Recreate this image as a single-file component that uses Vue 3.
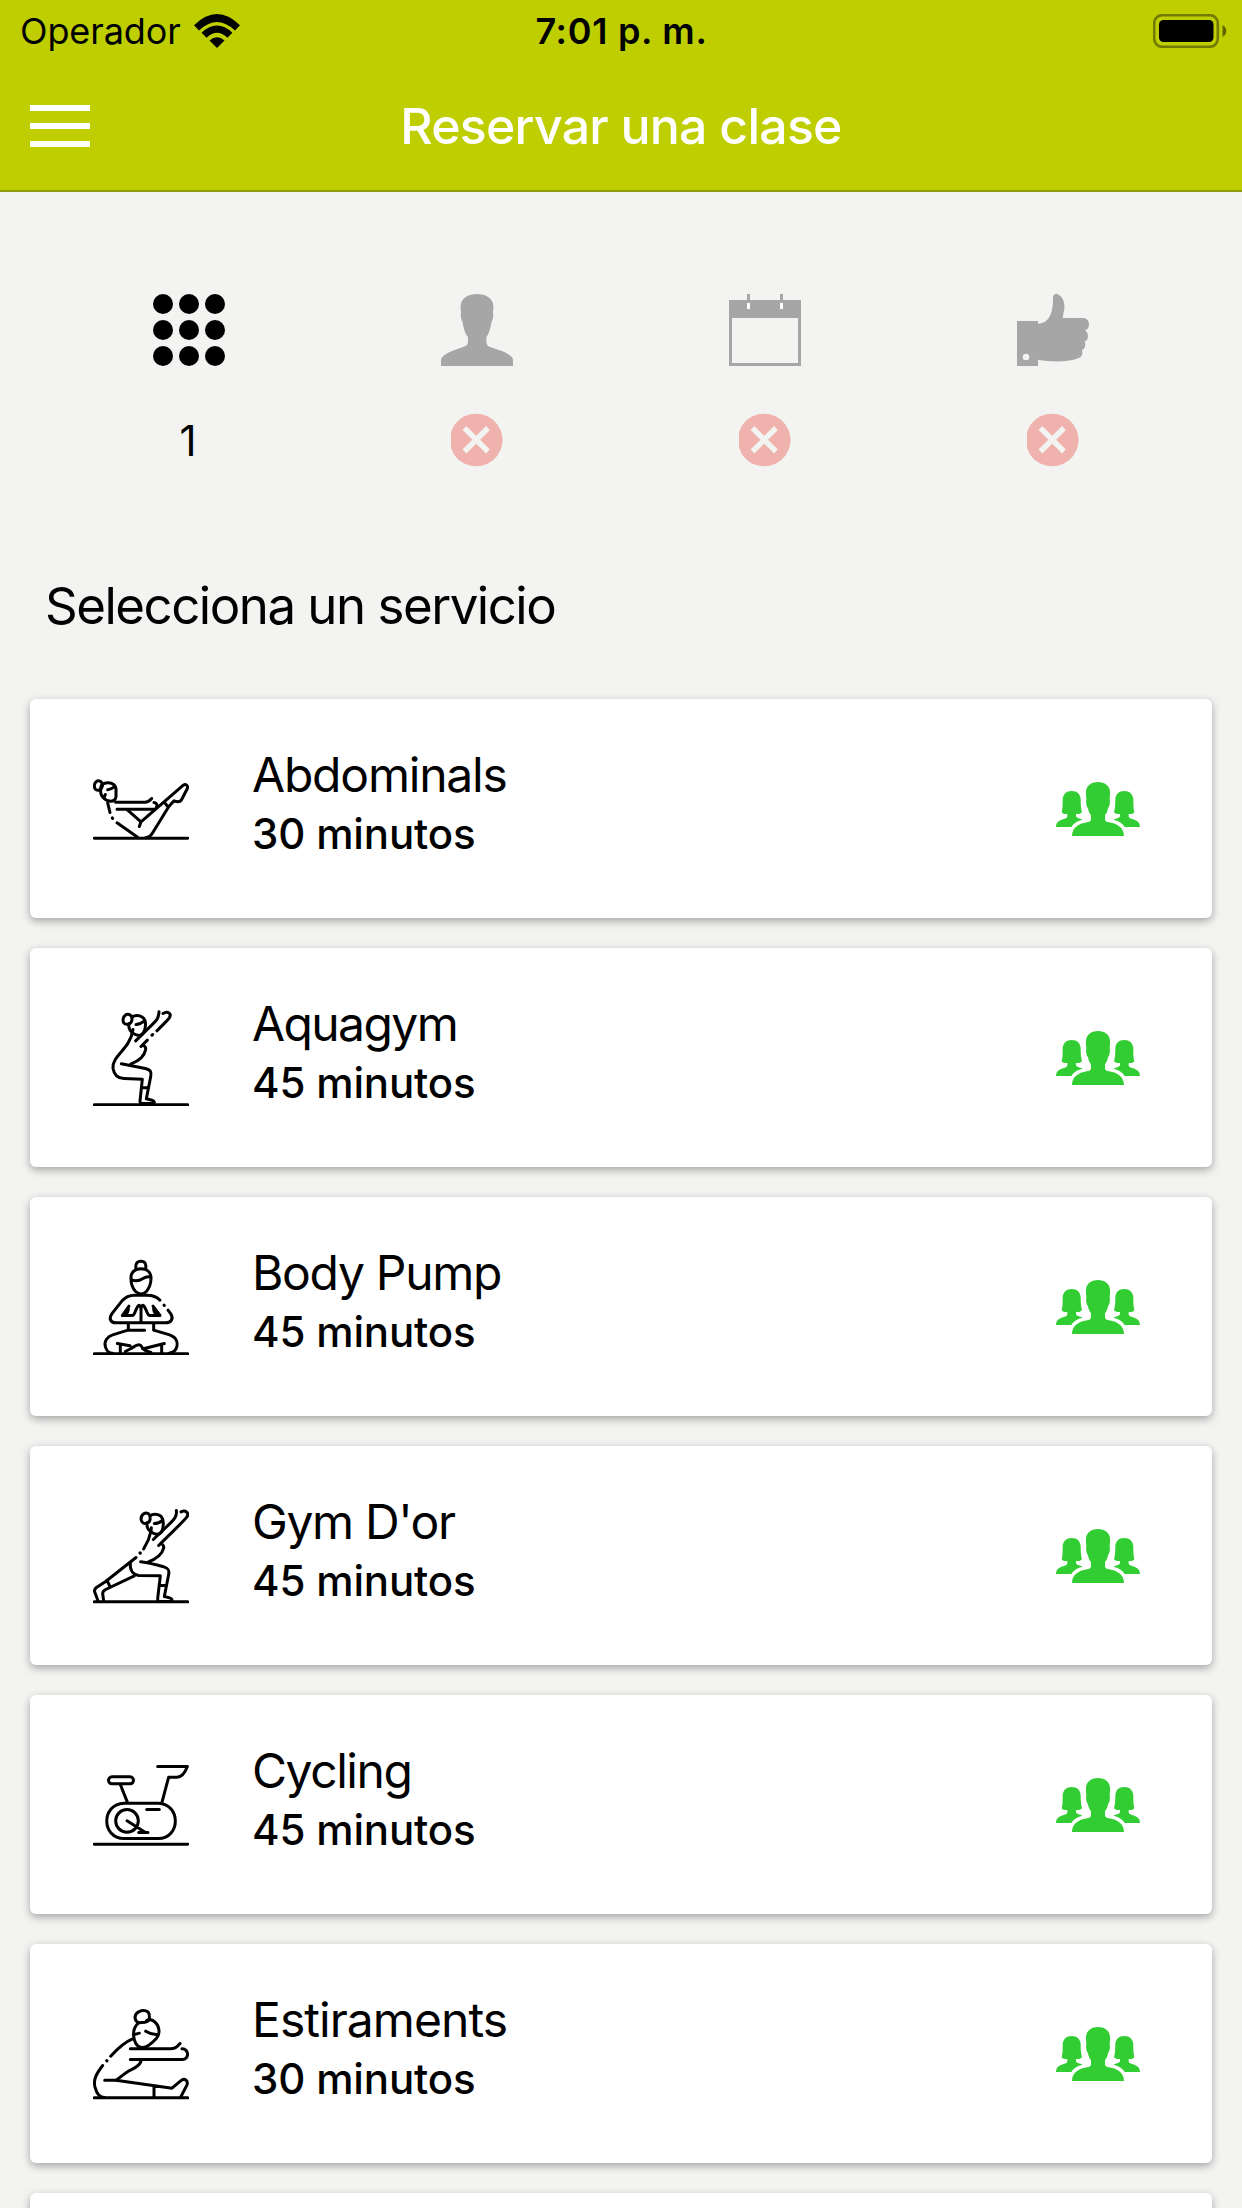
<script setup>
const steps = [
  { id: 'service', label: '1' },
  { id: 'person' },
  { id: 'date' },
  { id: 'confirm' },
]

const services = [
  {
    name: 'Abdominals',
    duration: '30 minutos',
    tracking: -1.2,
    viewBox: '39 1.5 288 288',
    paths: [
      'M43 233H323',
      'M62 63C52 57 43 65 43 77C43 88 52 91 59 88C68 84 71 70 62 63',
      'M66 72C80 62 104 66 108 84V108C107 118 101 122 93 122C76 122 60 108 62 88C62 80 63 75 66 72M104 79C96 84 90 87 83 88M76 102L73 110',
      'M107 125H195C206 125 209 121 215 114',
      'M111 146H221M222 126C231 128 234 134 228 143',
      'M83 127L90 156M97 172L98 174M111 187L173 230',
      'M143 149L183 184L310 74C317 69 325 75 322 84L305 117C301 125 293 125 282 121L266 139L218 217C213 226 207 231 197 232M183 184L178 198M254 127L265 140',
    ],
  },
  {
    name: 'Aquagym',
    duration: '45 minutos',
    tracking: -1.6,
    viewBox: '39 28.5 288 288',
    paths: [
      'M43 313H323',
      'M151 44C140 37 129 46 129 59C129 70 137 73 146 71M151 44C160 52 156 68 146 71',
      'M156 49C172 40 190 47 195 60C198 72 195 88 190 97C184 107 173 107 160 99C148 90 145 80 147 70M192 62C184 69 178 72 168 72',
      'M159 87C157 101 154 112 144 128C128 154 96 176 99 203C102 223 113 233 132 234L187 236L180 302C180 307 183 309 189 309H218C226 309 224 302 216 299L199 295L212 229C215 214 213 209 196 204L124 190',
      'M152 191C180 180 194 164 197 147C198 140 195 137 190 134M189 262H205',
      'M167 121L218 71C231 59 236 52 237 34M249 39C263 30 276 39 268 52C261 62 247 73 231 91M183 138L202 119M216 104L218 102',
    ],
  },
  {
    name: 'Body Pump',
    duration: '45 minutos',
    tracking: -1.3,
    viewBox: '39 25.5 288 288',
    paths: [
      'M43 310H323',
      'M168 56C166 40 170 32 183 32C196 32 199 42 197 56M183 55C164 55 152 66 153 83C153 99 159 115 167 123C177 132 190 132 199 123C209 111 213 99 213 83C213 65 201 55 183 55',
      'M154 88C169 94 180 90 189 84C197 79 204 77 212 80',
      'M240 149C230 138 218 134 200 134H163C144 134 135 141 126 151L97 188C85 203 91 217 108 217H257C274 217 281 204 273 191L264 179M252 164L253 165',
      'M183 214V180C183 160 176 161 170 174C163 187 164 195 156 195H127L147 167M183 180C183 160 190 161 196 174C203 187 202 195 210 195H240L219 167M133 193C142 189 146 183 145 171M233 193C224 189 220 183 221 171',
      'M145 220V239M221 220V239M194 239H144L98 253C82 258 72 272 76 288C79 300 86 308 98 308M221 239L269 253C286 259 294 272 291 287C288 300 280 307 267 308',
      'M112 279L150 286M253 279L193 294C184 296 187 283 177 283C169 283 163 288 153 294L136 303M121 284V307M245 285V307M187 294C194 301 204 303 213 306',
    ],
  },
  {
    name: "Gym D'or",
    duration: '45 minutos',
    tracking: -1.35,
    viewBox: '39 22.5 288 288',
    paths: [
      'M43 304H323',
      'M207 41C197 32 183 42 183 56C184 67 193 71 201 68M207 41C214 50 211 65 201 68',
      'M210 46C225 36 244 43 248 56C252 70 249 84 245 94C239 103 226 104 213 94C202 87 200 77 201 67M247 60C240 66 233 69 223 69',
      'M214 82L213 92L205 118L191 145M180 157L181 158M168 171L77 243L48 262C43 267 42 271 45 277L54 301M71 302L68 279C68 272 71 270 77 267L163 226M82 242L90 258',
      'M151 188C149 208 158 222 176 225L241 226L233 294C232 301 235 303 240 303H270C280 303 277 295 269 292L253 288L266 222C269 208 264 203 252 199C230 193 212 188 182 184M205 184C231 175 246 161 251 143C252 137 250 134 246 131M242 255H258',
      'M220 117L274 65C285 54 291 46 289 30M303 34C317 27 328 38 321 49C315 59 272 98 236 135',
    ],
  },
  {
    name: 'Cycling',
    duration: '45 minutos',
    tracking: -1.45,
    viewBox: '39 19.5 288 288',
    paths: [
      'M43 281H323',
      'M96 79H150C164 79 164 100 150 100H96C82 100 82 79 96 79',
      'M121 102L142 155M246 155L266 80H291C307 80 315 67 322 48H233',
      'M132 158H235C303 160 303 263 235 264H132C63 263 63 160 132 158',
      'M141 177A34 34 0 1 1 141 245A34 34 0 1 1 141 177M141 211L193 244M176 246H204M200 177H238',
    ],
  },
  {
    name: 'Estiraments',
    duration: '30 minutos',
    tracking: -0.95,
    viewBox: '39 16.5 288 288',
    paths: [
      'M43 292H323',
      'M176 67C162 61 161 42 176 34C192 26 207 31 208 44C210 56 206 63 195 65Z',
      'M176 67C160 80 158 101 164 121C168 133 177 141 186 141C200 142 216 128 229 114C242 99 238 76 225 65C217 57 207 56 200 60M160 103L178 98M197 92C207 98 219 104 236 101',
      'M158 115C133 125 111 146 92 167M80 180L81 181M68 195C49 220 39 237 45 260C49 276 57 291 74 291',
      'M151 145H270C284 145 290 141 300 129M306 145C327 144 329 177 307 177H151M184 179C181 193 172 200 153 208C138 214 126 228 108 239',
      'M74 239H108L276 263L302 241C314 231 325 241 321 253L303 288M222 257V290',
    ],
  },
  { name: '', duration: '', tracking: 0, viewBox: '0 0 288 288', paths: [] },
]
</script>

<template>
  <div class="screen">
    <header class="header">
      <div class="status">
        <div class="carrier">
          <span class="operator">Operador</span>
          <svg class="wifi" viewBox="0 0 46 34">
            <path d="M0 11.3Q23-11.3 46 11.3L41 16.4Q23-.6 5 16.4Z" />
            <path d="M7.6 18.8Q23 4.4 38.4 18.8L33.4 23.8Q23 13.8 12.6 23.8Z" />
            <path d="M15.5 26.6Q23 20 30.5 26.6L23 34Z" />
          </svg>
        </div>
        <span class="clock">7:01 p. m.</span>
        <div class="power">
          <svg class="battery" viewBox="0 0 74 34">
            <rect x="1.2" y="1.2" width="63.6" height="31.6" rx="8" fill="none" stroke="#000" stroke-opacity=".4" stroke-width="2.6" />
            <rect x="6" y="6" width="54.5" height="22" rx="4.5" />
            <path d="M69.5 11C74.5 13.5 74.5 20.5 69.5 23Z" fill-opacity=".5" />
          </svg>
        </div>
      </div>
      <div class="navbar">
        <button class="menu" aria-label="Menu"><i></i><i></i><i></i></button>
        <h1 class="title">Reservar una clase</h1>
      </div>
    </header>

    <main class="content">
      <div class="steps">
        <div v-for="step in steps" :key="step.id" class="step">
          <svg v-if="step.id === 'service'" class="step-icon active" viewBox="0 0 72 72">
            <template v-for="r in 3" :key="r">
              <circle v-for="c in 3" :key="c" :cx="c * 26 - 16" :cy="r * 26 - 16" r="10" />
            </template>
          </svg>
          <svg v-else-if="step.id === 'person'" class="step-icon" viewBox="933 72 216 216">
            <path d="M1041 72C1068 72 1089 86 1090 106C1091 115 1089 121 1089 130C1091 137 1089 148 1085 154C1082 173 1078 190 1069 202V215C1070 229 1078 230 1089 234C1112 241 1149 254 1149 270V288H933V270C933 254 970 240 994 233C1005 229 1014 228 1014 214V202C1004 190 1000 172 997 154C993 148 991 137 993 130C993 121 991 115 992 106C993 86 1014 72 1041 72Z" />
          </svg>
          <svg v-else-if="step.id === 'date'" class="step-icon" viewBox="87 72 216 216">
            <path fill-rule="evenodd" d="M87 90H141V72H150V90H240V72H249V90H303V288H87ZM96 144V279H294V144Z" />
            <path fill="#fff" d="M141 99H150V117H141ZM240 99H249V117H240Z" />
          </svg>
          <svg v-else class="step-icon" viewBox="951 72 216 216">
            <path fill-rule="evenodd" d="M951 153H1014V161C1048 161 1060 127 1059 84C1058 74 1067 68 1076 74C1091 83 1097 104 1091 126L1088 144H1149C1162 145 1167 153 1167 163C1167 173 1163 179 1155 181C1168 190 1166 211 1154 214C1158 224 1155 237 1146 240C1149 254 1146 260 1134 265C1106 277 1052 276 1014 269V288H951ZM978 251A10 10 0 1 0 978 271A10 10 0 1 0 978 251Z" />
          </svg>
          <div class="step-state">
            <span v-if="step.label" class="step-number">{{ step.label }}</span>
            <svg v-else class="cross" viewBox="0 0 52 54">
              <path class="disc" d="M0 19.5C4 7 14 .8 25.3 .8A26.2 26.2 0 0 1 25.3 53.2C14 53.2 4 47 0 34.5Z" />
              <path class="mark" d="M13.5 15L37 38.5M37 15L13.5 38.5" />
            </svg>
          </div>
        </div>
      </div>

      <h2 class="heading">Selecciona un servicio</h2>

      <div class="services">
        <article v-for="(service, i) in services" :key="i" class="card">
          <svg class="exercise" :viewBox="service.viewBox">
            <path v-for="(d, n) in service.paths" :key="n" :d="d" />
          </svg>
          <div class="info">
            <div class="name" :style="{ letterSpacing: service.tracking + 'px' }">{{ service.name }}</div>
            <div class="duration">{{ service.duration }}</div>
          </div>
          <svg class="group" viewBox="78 66 252 162">
            <path d="M125 93C142 93 151 103 152 118C152 135 153 147 156 157C151 162 144 163 138 162V168C139 175 149 174 157 179C140 184 129 190 124 201H78C78 184 91 180 104 176C109 174 112 173 112 168V162C105 163 99 162 95 157C98 147 98 135 98 118C99 103 109 93 125 93Z" />
            <path d="M283 93C266 93 257 103 256 118C256 135 255 147 252 157C257 162 264 163 270 162V168C269 175 259 174 251 179C268 184 279 190 284 201H330C330 184 317 180 304 176C299 174 296 173 296 168V162C303 163 309 162 313 157C310 147 310 135 310 118C309 103 299 93 283 93Z" />
            <path d="M204 66C225 66 239 78 240 95C241 104 239 110 239 117C241 128 239 138 234 145C233 154 229 160 225 166V178C225 184 231 186 237 187C264 191 282 205 282 228H126C126 205 144 191 171 187C177 186 183 184 183 178V166C179 160 175 154 174 145C169 138 167 128 169 117C169 110 167 104 168 95C169 78 183 66 204 66Z" />
          </svg>
        </article>
      </div>
    </main>
  </div>
</template>

<style>
body {
  margin: 0;
}
</style>

<style scoped>
.screen {
  width: 1242px;
  height: 2208px;
  overflow: hidden;
  background: #f3f3f2;
  color: #000;
  font-family: Inter, "Liberation Sans", sans-serif;
}

.header {
  box-sizing: border-box;
  height: 192px;
  background: #bfce00;
  border-bottom: 2px solid #909c0a;
}

.status {
  display: grid;
  grid-template-columns: 1fr auto 1fr;
  height: 60px;
  padding: 0 15px 0 20px;
}

.carrier {
  display: flex;
  align-items: center;
  font-size: 36px;
}

.operator {
  letter-spacing: -0.1px;
  white-space: nowrap;
}

.wifi {
  width: 46px;
  height: 34px;
  margin-left: 13px;
}

.clock {
  margin-left: -4px;
  font-size: 36px;
  font-weight: 600;
  line-height: 62px;
  letter-spacing: 0.7px;
  white-space: nowrap;
}

.power {
  display: flex;
  align-items: center;
  justify-content: flex-end;
}

.battery {
  width: 74px;
  height: 34px;
}

.navbar {
  display: grid;
  grid-template-columns: 1fr auto 1fr;
  align-items: center;
  height: 132px;
  padding: 0 30px;
}

.menu {
  display: flex;
  flex-direction: column;
  gap: 12px;
  width: 60px;
  padding: 0;
  border: 0;
  background: none;
}

.menu i {
  height: 6px;
  background: #fff;
}

.title {
  margin: 0;
  color: #fff;
  font-size: 50px;
  font-weight: 500;
  line-height: 60px;
  letter-spacing: -0.75px;
  white-space: nowrap;
}

.content {
  padding-top: 102px;
}

.steps {
  display: grid;
  grid-template-columns: repeat(4, 1fr);
  padding: 0 45px;
}

.step {
  display: flex;
  flex-direction: column;
  align-items: center;
}

.step-icon {
  width: 72px;
  height: 72px;
  fill: #a6a6a6;
}

.step-icon.active {
  fill: #000;
}

.step-state {
  display: flex;
  align-items: center;
  justify-content: center;
  height: 66px;
  margin-top: 41px;
}

.step-number {
  margin-right: 2px;
  font-size: 42px;
}

.cross {
  width: 52px;
  height: 54px;
}

.disc {
  fill: #f0b2ad;
}

.mark {
  fill: none;
  stroke: #f3f3f2;
  stroke-width: 5.4;
}

.heading {
  margin: 103px 0 63px 45px;
  font-size: 51px;
  font-weight: 400;
  line-height: 60px;
  letter-spacing: -1.5px;
  white-space: nowrap;
}

.services {
  display: flex;
  flex-direction: column;
  gap: 30px;
  padding: 0 30px;
}

.card {
  box-sizing: border-box;
  display: flex;
  align-items: center;
  height: 219px;
  flex-shrink: 0;
  padding: 0 72px 0 63px;
  border-radius: 6px;
  background: #fff;
  box-shadow: 0 3px 8px rgba(0, 0, 0, 0.33);
}

.exercise {
  width: 96px;
  height: 96px;
  fill: none;
  stroke: #000;
  stroke-width: 9;
  stroke-linecap: round;
  stroke-linejoin: round;
}

.info {
  flex: 1;
  margin-left: 63px;
  padding-bottom: 9px;
  white-space: nowrap;
}

.name {
  height: 59px;
  font-size: 48px;
  line-height: 60px;
}

.duration {
  height: 60px;
  font-size: 42px;
  font-weight: 500;
  line-height: 59px;
  letter-spacing: -0.15px;
}

.group {
  width: 84px;
  height: 54px;
  fill: #32cd32;
}
</style>
